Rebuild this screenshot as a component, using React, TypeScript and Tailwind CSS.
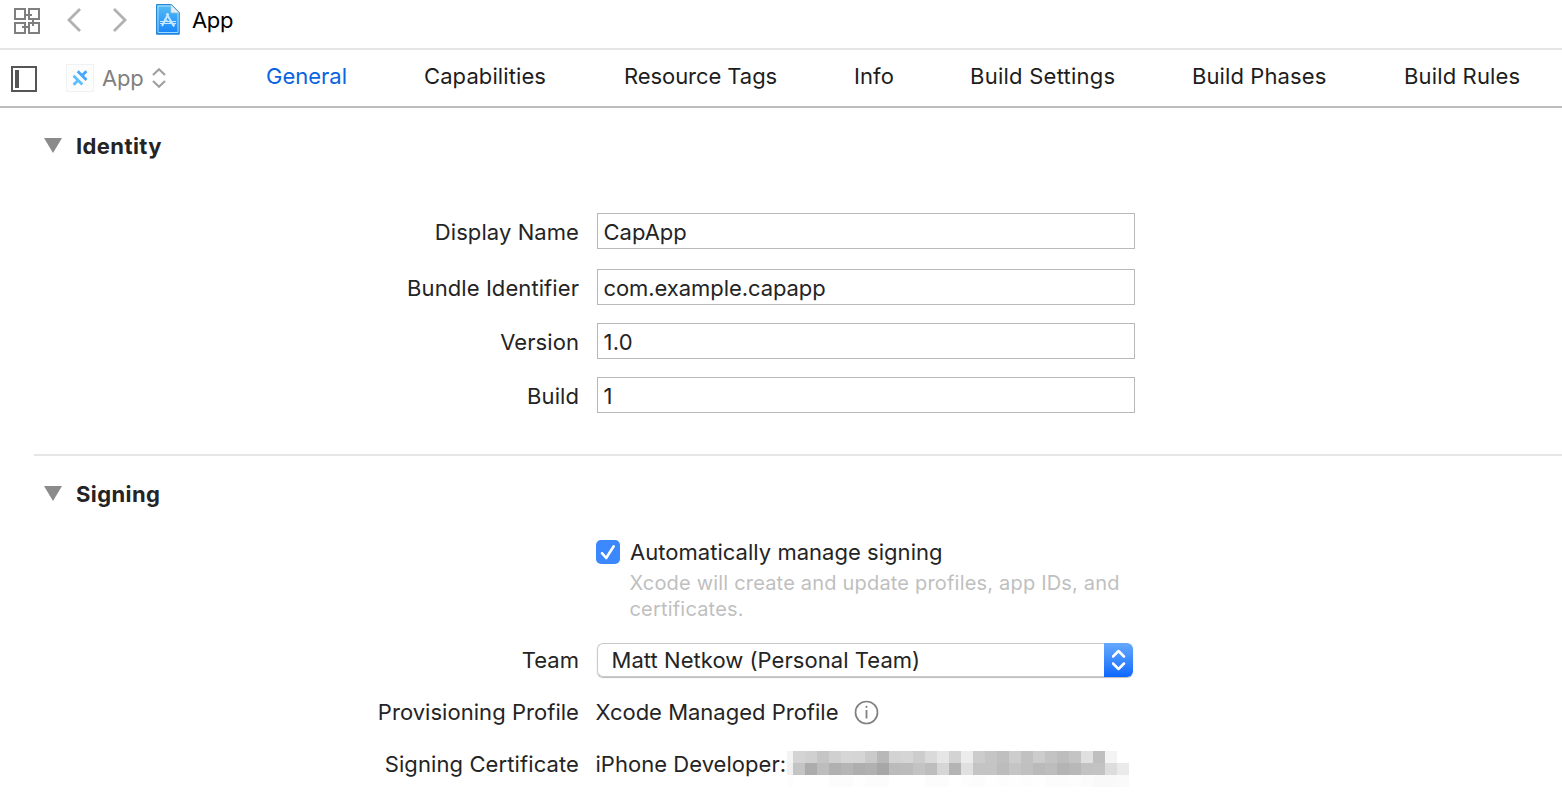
import type { ReactNode } from "react";

const tabs = [
  { name: "General", style: "ml-[100px] w-[158px] text-[#0a63e0]" },
  { name: "Capabilities", style: "w-[200px] tracking-[0.1px]" },
  { name: "Resource Tags", style: "w-[230px] tracking-[-0.07px]" },
  { name: "Info", style: "w-[116px] tracking-[0.1px]" },
  { name: "Build Settings", style: "w-[222px] tracking-[0.25px]" },
  { name: "Build Phases", style: "w-[212px] tracking-[0.1px]" },
  { name: "Build Rules", style: "tracking-[0.15px]" },
];

const fields = [
  { label: "Display Name", value: "CapApp", style: "mb-5", text: "" },
  { label: "Bundle Identifier", value: "com.example.capapp", style: "mb-[18px]", text: "tracking-[-0.07px]" },
  { label: "Version", value: "1.0", style: "mb-[18px]", text: "tracking-[0.2px]" },
  { label: "Build", value: "1", style: "", text: "" },
];

const topShades = ["f4f4f4", "d4d4d4", "d0d0d0", "c5c5c5", "d0d0d0", "d6d6d6", "d5d5d5", "cacaca", "b8b8b8", "d3d3d3", "d5d5d5", "cdcdcd", "dadada", "e6e6e6", "d3d3d3", "ececec", "cccccc", "c5c5c5", "bfbfbf", "cdcdcd", "c1c1c1", "cccccc", "c3c3c3", "bdbdbd", "c4c4c4", "e0e0e0", "bfbfbf", "f4f4f4", "ffffff"];
const bottomShades = ["f0f0f0", "c4c4c4", "acacac", "bdbdbd", "b0b0b0", "b5b5b5", "aeaeae", "b1b1b1", "a7a7a7", "bbbbbb", "bcbcbc", "c3c3c3", "bdbdbd", "d6d6d6", "b4b4b4", "e0e0e0", "c4c4c4", "c4c4c4", "bcbcbc", "c5c5c5", "c0c0c0", "bababa", "bdbdbd", "b4b4b4", "b8b8b8", "c2c2c2", "c3c3c3", "dddddd", "eaeaea"];
const fadeShades = ["fdfdfd", "ffffff", "ffffff", "ffffff", "fcfcfc", "fcfcfc", "fefefe", "fcfcfc", "fcfcfc", "ffffff", "ffffff", "ffffff", "fcfcfc", "fcfcfc", "ffffff", "fdfdfd", "fcfcfc", "fefefe", "fdfdfd", "fefefe", "fdfdfd", "fefefe", "fcfcfc", "fcfcfc", "fdfdfd", "fbfbfb", "f9f9f9", "f9f9f9", "fafafa"];

function MosaicRow({ shades }: { shades: string[] }) {
  return (
    <div className="flex h-3">
      {shades.map((shade, i) => (
        <div key={i} className={i === 0 ? "w-[6px]" : "w-3"} style={{ backgroundColor: `#${shade}` }} />
      ))}
    </div>
  );
}

function Label({ children, style = "" }: { children: ReactNode; style?: string }) {
  return <div className={`w-[580px] shrink-0 pr-px text-right ${style}`}>{children}</div>;
}

function SectionTitle({ children }: { children: ReactNode }) {
  return (
    <div className="flex h-8 items-center pl-[44px]">
      <svg width="18" height="15" viewBox="0 0 18 15" className="mb-0.5">
        <path d="M0 0H18L9 15Z" fill="#8b8b8b" />
      </svg>
      <h2 className="ml-[14px] text-[22px] font-bold tracking-[0.4px]">{children}</h2>
    </div>
  );
}

function GridIcon() {
  return (
    <svg width="26" height="26" viewBox="0 0 26 26" fill="none" stroke="#7f7f7f" strokeWidth="2">
      <path d="M1 1H11V11H1ZM15 1H25V11H15ZM1 15H11V25H1ZM15 15H25V25H15Z" />
      <path d="M11 7H18M19 11V18M8 19H15" />
    </svg>
  );
}

function ProjectIcon() {
  return (
    <svg width="24" height="31" viewBox="0 0 24 31">
      <defs>
        <linearGradient id="page" x1="0" y1="0" x2="0" y2="1">
          <stop offset="0" stopColor="#55bff5" />
          <stop offset="1" stopColor="#1683fb" />
        </linearGradient>
      </defs>
      <path d="M.5 .5H15.5L23.3 8.5V30.2H.5Z" fill="url(#page)" stroke="#2488d4" />
      <path d="M2 2H14.5L22 9.5V28.5H2Z" fill="none" stroke="#b6e2fc" strokeWidth=".9" />
      <path d="M15 .7L23 8.8H15Z" fill="#e7edf0" stroke="#b8cbd5" strokeWidth=".6" />
      <g fill="none" stroke="#c4e8ff">
        <path d="M12.5 9.5L6 22M10.5 9.5L18 22.5" strokeWidth="2" />
        <path d="M4 17.5H20M4 19.5H20" strokeWidth="1" />
        <path d="M8 15L19 21" strokeWidth="1" />
      </g>
    </svg>
  );
}

function TargetIcon() {
  return (
    <svg width="28" height="28" viewBox="0 0 28 28">
      <rect x=".5" y=".5" width="27" height="27" fill="#fdfdfd" stroke="#f1f1f1" />
      <path d="M0 0L28 28M28 0L0 28M0 14L14 0L28 14L14 28Z" stroke="#f5f5f5" strokeWidth=".6" fill="none" />
      <g fill="none" strokeWidth="2.8">
        <path d="M7.5 11.7L16.3 20.5M12.2 16.2L7.6 20.8" stroke="#5cbfff" />
        <path d="M11.7 7.3L20.5 16.1M15.9 11.7L20.4 7.2" stroke="#45a8fb" />
      </g>
    </svg>
  );
}

export default function App() {
  return (
    <div className="h-[800px] w-[1562px] overflow-hidden bg-white font-['Inter','Liberation_Sans',sans-serif] text-[22px] leading-8 whitespace-nowrap text-[#242424]">
      <header className="flex h-[50px] items-start border-b-2 border-[#e5e5e5] pl-[14px]">
        <div className="pt-2">
          <GridIcon />
        </div>
        <svg className="mt-2 ml-[26px]" width="62" height="24" viewBox="0 0 62 24" fill="none" stroke="#b1b1b1" strokeWidth="2.8">
          <path d="M14 1L3 12L14 23M48 1L59 12L48 23" />
        </svg>
        <div className="mt-1 ml-[28px]">
          <ProjectIcon />
        </div>
        <span className="mt-1 ml-3 tracking-[-0.35px] text-black">App</span>
      </header>

      <nav className="flex h-[58px] items-start border-b-2 border-[#bdbdbd] pt-[10px] pl-[11px]">
        <svg className="mt-[6px]" width="26" height="26" viewBox="0 0 26 26">
          <rect x="1" y="1" width="24" height="24" fill="none" stroke="#555" strokeWidth="2" />
          <path d="M4 4H8V22H4Z" fill="#555" />
        </svg>
        <div className="mt-1 ml-[29px]">
          <TargetIcon />
        </div>
        <span className="mt-[2px] ml-2 w-[42px] tracking-[-0.2px] text-[#808080]">App</span>
        <svg className="mt-[8px] ml-2" width="14" height="20" viewBox="0 0 14 20" fill="none" stroke="#a0a0a0" strokeWidth="2.2">
          <path d="M1 7L7 1.3L13 7M1 13L7 18.7L13 13" />
        </svg>
        <div className="flex text-[#1d1d1d]">
          {tabs.map((tab) => (
            <div key={tab.name} className={`shrink-0 ${tab.style}`}>
              {tab.name}
            </div>
          ))}
        </div>
      </nav>

      <section className="h-[346px] pt-[22px]">
        <SectionTitle>Identity</SectionTitle>
        <div className="mt-[51px]">
          {fields.map((field) => (
            <div key={field.label} className={`flex h-9 ${field.style}`}>
              <Label style="pt-[3px] tracking-[0.08px]">{field.label}</Label>
              <div className={`ml-[17px] w-[538px] border border-[#b9b9b9] pt-[2px] pl-[5.5px] ${field.text}`}>
                {field.value}
              </div>
            </div>
          ))}
        </div>
      </section>

      <section className="ml-[34px] border-t-2 border-[#e6e6e6]">
        <div className="-ml-[34px] pt-[22px]">
          <SectionTitle>Signing</SectionTitle>

          <div className="mt-[26px] flex pl-[596px]">
            <svg className="mt-1" width="24" height="24" viewBox="0 0 24 24">
              <rect width="24" height="24" rx="5" fill="#3b87fc" />
              <path d="M6 13.2L10.2 18L17.7 6.3" fill="none" stroke="white" strokeWidth="2.6" strokeLinecap="round" strokeLinejoin="round" />
            </svg>
            <span className="ml-[10px] tracking-[0.03px]">Automatically manage signing</span>
          </div>
          <p className="mt-[2px] pl-[629.5px] text-[20px] leading-[26px] tracking-[0.19px] text-[#bfbfbf]">
            Xcode will create and update profiles, app IDs, and
            <br />
            certificates.
          </p>

          <div className="mt-[21px] flex h-[34px]">
            <Label style="pt-px">Team</Label>
            <div className="ml-[17px] flex w-[536px] rounded-[6px] shadow-[0_1px_1px_#bbb]">
              <div className="w-[507px] rounded-l-[6px] border border-r-0 border-[#c9c9c9] pl-[13.5px] tracking-[0.05px]">
                Matt Netkow (Personal Team)
              </div>
              <div className="flex w-[29px] items-center justify-center rounded-r-[6px] bg-linear-to-b from-[#65a9fd] to-[#0867ff]">
                <svg width="14" height="22" viewBox="0 0 14 22" fill="none" stroke="white" strokeWidth="2.5" strokeLinecap="round" strokeLinejoin="round">
                  <path d="M1 7.5L6.5 2L12 7.5M1 14.5L6.5 20L12 14.5" />
                </svg>
              </div>
            </div>
          </div>

          <div className="mt-[19px] flex h-8">
            <Label style="tracking-[0.04px]">Provisioning Profile</Label>
            <span className="ml-[15.5px] w-[242px]">Xcode Managed Profile</span>
            <svg className="mt-[3.5px] ml-[16.5px]" width="25" height="25" viewBox="0 0 25 25" fill="none" stroke="#808080">
              <circle cx="12.5" cy="12.5" r="11" strokeWidth="1.7" />
              <path d="M12.5 10V18.5" strokeWidth="1.8" />
              <circle cx="12.5" cy="6.8" r="1.1" fill="#808080" stroke="none" />
            </svg>
          </div>

          <div className="mt-5 flex h-8">
            <Label style="tracking-[0.1px]">Signing Certificate</Label>
            <span className="ml-[15.5px] w-[191.5px] tracking-[0.03px]">iPhone Developer:</span>
            <div className="mt-[3px] h-10 w-[342px]">
              <MosaicRow shades={topShades} />
              <MosaicRow shades={bottomShades} />
              <MosaicRow shades={fadeShades} />
            </div>
          </div>
        </div>
      </section>
    </div>
  );
}
